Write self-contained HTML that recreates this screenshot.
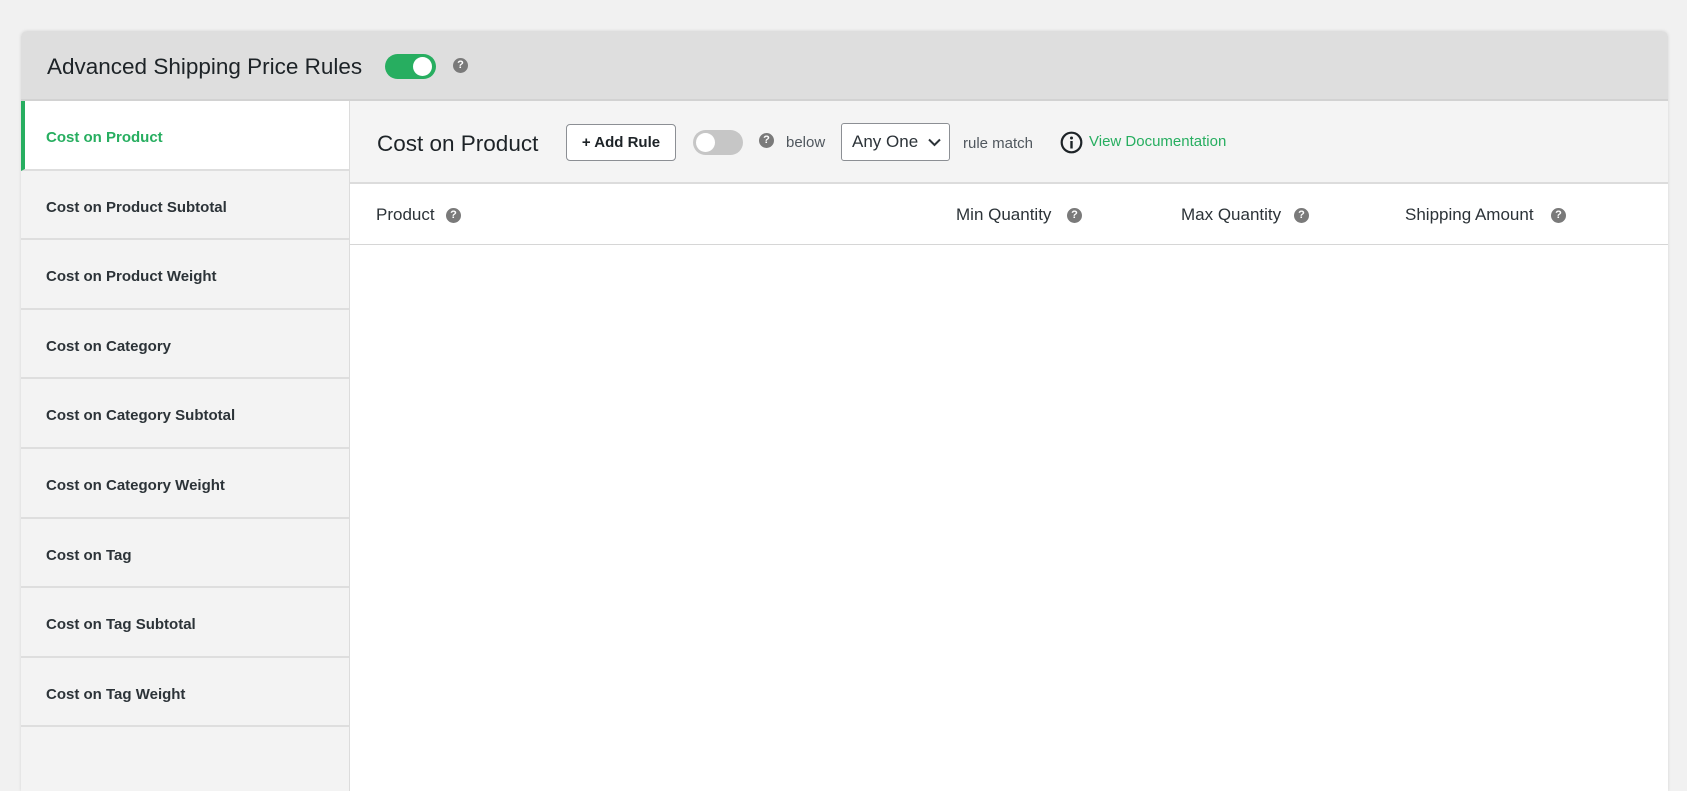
<!DOCTYPE html>
<html><head><meta charset="utf-8"><style>
*{box-sizing:border-box;margin:0;padding:0}
body{width:1687px;height:752px;background:#f1f1f1;font-family:"Segoe UI","Liberation Sans",sans-serif;color:#1d2327;overflow:hidden;position:relative}
.card{position:absolute;left:21px;top:31px;width:1647px;height:760px;background:#fff;border-radius:6px 6px 0 0;box-shadow:0 0 3px rgba(0,0,0,.12);overflow:hidden}
.hdr{position:absolute;left:0;top:0;width:100%;height:70px;background:#dedede;border-bottom:2px solid #d2d2d2}
.hdr h1{position:absolute;left:26px;top:23px;font-size:22.5px;font-weight:normal;color:#1d2327}
.tog{position:absolute;width:51px;height:25px;border-radius:13px}
.tog i{position:absolute;top:3px;width:19px;height:19px;border-radius:50%;background:#fff}
.q{position:absolute;width:15px;height:15px;border-radius:50%;background:#7a7a7a;color:#fff;font-size:11px;font-weight:bold;text-align:center;line-height:15px;font-family:"Liberation Sans",sans-serif}
.side{position:absolute;left:0;top:70px;width:329px;height:700px;background:#f3f3f3;border-right:1px solid #dcdcdc}
.item{height:69.6px;border-bottom:2px solid #dedede;font-size:15px;font-weight:bold;color:#2c3338;padding-left:25px;line-height:73px}
.item.act{background:#fff;color:#27ae60;border-left:4px solid #27ae60;padding-left:21px}
.bar{position:absolute;left:329px;top:70px;right:0;height:83px;background:#f4f4f4;border-bottom:2px solid #dcdcdc}
.thead{position:absolute;left:329px;top:153px;right:0;height:61px;border-bottom:1px solid #d6d6d6;background:#fff}
.thead span{position:absolute;top:21px;font-size:17px;color:#2c3338}
.thead .q{top:24px}
.abs{position:absolute}
</style></head><body>
<div class="card">
 <div class="hdr">
  <h1>Advanced Shipping Price Rules</h1>
  <div class="tog" style="left:364px;top:23px;background:#27ae60"><i style="right:4px"></i></div>
  <div class="q" style="left:432px;top:27px">?</div>
 </div>
 <div class="side">
  <div class="item act">Cost on Product</div>
  <div class="item">Cost on Product Subtotal</div>
  <div class="item">Cost on Product Weight</div>
  <div class="item">Cost on Category</div>
  <div class="item">Cost on Category Subtotal</div>
  <div class="item">Cost on Category Weight</div>
  <div class="item">Cost on Tag</div>
  <div class="item">Cost on Tag Subtotal</div>
  <div class="item">Cost on Tag Weight</div>
  <div class="item"></div>
 </div>
 <div class="bar">
  <div class="abs" style="left:27px;top:30px;font-size:22.5px;color:#1d2327">Cost on Product</div>
  <div class="abs" style="left:216px;top:23px;width:110px;height:37px;background:#fff;border:1px solid #8c8f94;border-radius:4px;font-size:15px;font-weight:bold;text-align:center;line-height:36px">+ Add Rule</div>
  <div class="tog" style="left:343px;top:29px;width:50px;background:#c6c6c6"><i style="left:3px"></i></div>
  <div class="q" style="left:409px;top:32px">?</div>
  <div class="abs" style="left:436px;top:33px;font-size:15px;color:#50575e">below</div>
  <div class="abs" style="left:491px;top:22px;width:109px;height:38px;background:#fff;border:1px solid #8c8f94;border-radius:3px;font-size:17px;line-height:36px;padding-left:10px;color:#2c3338">Any One <svg style="position:absolute;right:8px;top:14px" width="13" height="9" viewBox="0 0 13 9"><path d="M1 1.5l5.5 5.5 5.5-5.5" fill="none" stroke="#2c3338" stroke-width="2"/></svg></div>
  <div class="abs" style="left:613px;top:34px;font-size:15px;color:#50575e">rule match</div>
  <svg class="abs" style="left:710px;top:30px" width="23" height="23" viewBox="0 0 23 23"><circle cx="11.5" cy="11.5" r="9.8" fill="none" stroke="#1d2327" stroke-width="2.2"/><circle cx="11.5" cy="7" r="1.5" fill="#1d2327"/><rect x="10.3" y="10" width="2.4" height="7.5" fill="#1d2327"/></svg>
  <div class="abs" style="left:739px;top:32px;font-size:15px;color:#27ae60">View Documentation</div>
 </div>
 <div class="thead">
  <span style="left:26px">Product</span><div class="q" style="left:96px">?</div>
  <span style="left:606px">Min Quantity</span><div class="q" style="left:717px">?</div>
  <span style="left:831px">Max Quantity</span><div class="q" style="left:944px">?</div>
  <span style="left:1055px">Shipping Amount</span><div class="q" style="left:1201px">?</div>
 </div>
</div>
</body></html>
